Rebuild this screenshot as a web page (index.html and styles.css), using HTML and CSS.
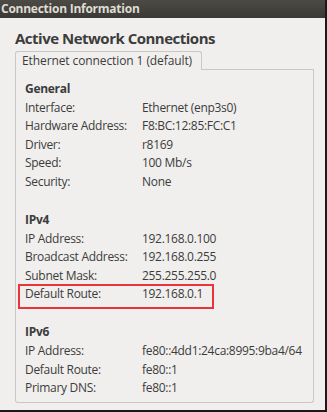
FILE: index.html
```html
<!DOCTYPE html>
<html>
<head>
<meta charset="utf-8">
<link rel="stylesheet" href="styles.css">
</head>
<body>
<div class="window">
  <div class="titlebar">Connection Information</div>
  <div class="content">
    <h1 class="heading">Active Network Connections</h1>
    <div class="tabs">
      <div class="tab">Ethernet connection 1 (default)</div>
      <div class="tab-fill"></div>
    </div>
    <div class="panel">
      <div class="section">
        <div class="section-title">General</div>
        <div class="row"><span class="label">Interface:</span><span class="value">Ethernet (enp3s0)</span></div>
        <div class="row"><span class="label">Hardware Address:</span><span class="value">F8:BC:12:85:FC:C1</span></div>
        <div class="row"><span class="label">Driver:</span><span class="value">r8169</span></div>
        <div class="row"><span class="label">Speed:</span><span class="value">100 Mb/s</span></div>
        <div class="row"><span class="label">Security:</span><span class="value">None</span></div>
      </div>
      <div class="section">
        <div class="section-title">IPv4</div>
        <div class="row"><span class="label">IP Address:</span><span class="value">192.168.0.100</span></div>
        <div class="row"><span class="label">Broadcast Address:</span><span class="value">192.168.0.255</span></div>
        <div class="row"><span class="label">Subnet Mask:</span><span class="value">255.255.255.0</span></div>
        <div class="row highlight"><span class="label">Default Route:</span><span class="value">192.168.0.1</span></div>
      </div>
      <div class="section">
        <div class="section-title">IPv6</div>
        <div class="row"><span class="label">IP Address:</span><span class="value">fe80::4dd1:24ca:8995:9ba4/64</span></div>
        <div class="row"><span class="label">Default Route:</span><span class="value">fe80::1</span></div>
        <div class="row"><span class="label">Primary DNS:</span><span class="value">fe80::1</span></div>
      </div>
    </div>
  </div>
</div>
</body>
</html>
```
FILE: styles.css
```css
* { box-sizing: border-box; }
html, body { margin: 0; padding: 0; }
body {
  width: 327px;
  height: 412px;
  overflow: hidden;
  background: #1a1a1a;
  font-family: "Open Sans", "DejaVu Sans", sans-serif;
  color: #3c3c3c;
}
.window {
  width: 325px;
  height: 410px;
  background: #f0efed;
  display: flex;
  flex-direction: column;
}
.titlebar {
  height: 18px;
  background: linear-gradient(#4b4a45, #3a3935);
  color: #dfdbd2;
  font-size: 12px;
  font-weight: 700;
  line-height: 18px;
  padding-left: 1px;
  letter-spacing: -0.25px;
}
.content {
  padding: 0 11px 0 15px;
  flex: 1;
  display: flex;
  flex-direction: column;
}
.heading {
  margin: 0;
  font-size: 15px;
  font-weight: 700;
  line-height: 20px;
  padding-top: 10px;
  letter-spacing: -0.5px;
  color: #3c3c3c;
}
.tabs {
  display: flex;
  margin-top: 3px;
  height: 19px;
}
.tab {
  width: 187px;
  border: 1px solid #cbc7c2;
  border-bottom: none;
  border-radius: 3px 3px 0 0;
  font-size: 12px;
  line-height: 18px;
  padding-left: 6px;
  letter-spacing: -0.1px;
  background: #f0efed;
}
.tab-fill {
  flex: 1;
  border-bottom: 1px solid #cbc7c2;
}
.panel {
  height: 333px;
  border: 1px solid #cbc7c2;
  border-top: none;
  border-radius: 0 0 3px 3px;
  padding: 10px 0 0 9px;
}
.section + .section { margin-top: 19.4px; }
.section-title, .row {
  font-size: 12px;
  line-height: 18.6px;
  height: 18.6px;
  letter-spacing: -0.3px;
}
.section-title { font-weight: 700; }
.row {
  display: grid;
  grid-template-columns: 117px 1fr;
  white-space: nowrap;
}
.highlight { position: relative; }
.highlight::after {
  content: "";
  position: absolute;
  left: -7px;
  top: -1px;
  width: 192px;
  height: 21px;
  border: 2px solid #e8343a;
}
```
